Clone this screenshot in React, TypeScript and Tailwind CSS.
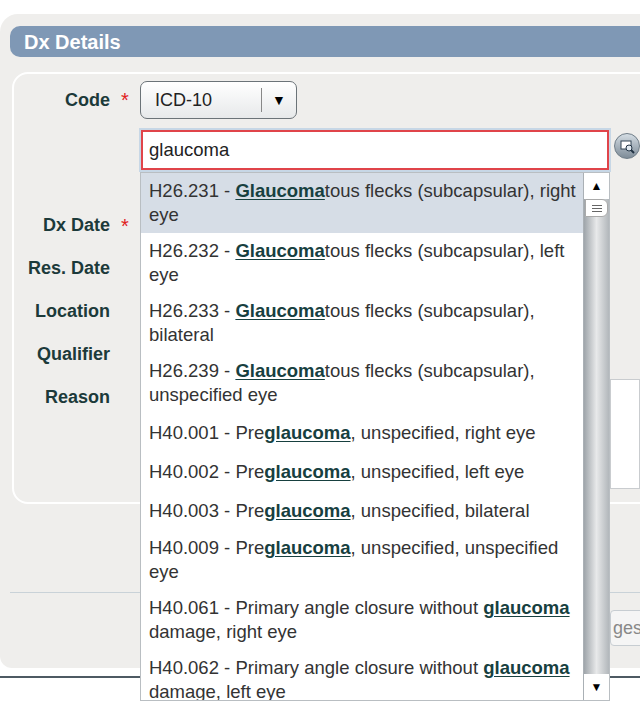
import React from "react";

const T = ({ pre, hit, post }: { pre: string; hit: string; post: string }) => (
  <>
    {pre}
    <b className="font-bold underline text-[#17403f] underline-offset-2">{hit}</b>
    {post}
  </>
);

const rows: { pre: string; hit: string; post: string; h: number }[] = [
  { pre: "H26.231 - ", hit: "Glaucoma", post: "tous flecks (subcapsular), right eye", h: 60 },
  { pre: "H26.232 - ", hit: "Glaucoma", post: "tous flecks (subcapsular), left eye", h: 60 },
  { pre: "H26.233 - ", hit: "Glaucoma", post: "tous flecks (subcapsular), bilateral", h: 60 },
  { pre: "H26.239 - ", hit: "Glaucoma", post: "tous flecks (subcapsular), unspecified eye", h: 60 },
  { pre: "H40.001 - Pre", hit: "glaucoma", post: ", unspecified, right eye", h: 39 },
  { pre: "H40.002 - Pre", hit: "glaucoma", post: ", unspecified, left eye", h: 39 },
  { pre: "H40.003 - Pre", hit: "glaucoma", post: ", unspecified, bilateral", h: 39 },
  { pre: "H40.009 - Pre", hit: "glaucoma", post: ", unspecified, unspecified eye", h: 60 },
  { pre: "H40.061 - Primary angle closure without ", hit: "glaucoma", post: " damage, right eye", h: 60 },
  { pre: "H40.062 - Primary angle closure without ", hit: "glaucoma", post: " damage, left eye", h: 60 },
];

const Label = ({ text, star }: { text: string; star?: boolean }) => (
  <div className="flex items-center h-[43px]">
    <span className="w-[96px] text-right font-bold text-[18px] text-[#1c3a3a]">{text}</span>
    <span className="w-[30px] text-center text-[#e0201c] text-[20px]">{star ? "*" : ""}</span>
  </div>
);

export default function App() {
  return (
    <div className="relative w-[640px] h-[720px] bg-white overflow-hidden" style={{ fontFamily: '"Liberation Sans", Arial, sans-serif' }}>
      <div className="absolute left-0 top-[14px] w-[660px] h-[654px] bg-[#efeeec] rounded-tl-[18px] rounded-bl-[12px] pt-[12px] pl-[10px]">
        <div className="h-[31px] bg-[#7f98b5] rounded-l-[10px] flex items-center pl-[14px] text-white font-bold text-[20px]">Dx Details</div>
        <div className="mt-[15px] ml-[2px] h-[432px] border-2 border-white rounded-[16px] pt-[6px]">
          <div className="flex items-center h-[40px]">
            <Label text="Code" star />
            <div className="w-[157px] h-[38px] border border-[#6b7378] rounded-[7px] bg-gradient-to-b from-white to-[#e7e9ea] flex items-center">
              <span className="pl-[14px] text-[18px] text-[#222] flex-1">ICD-10</span>
              <span className="w-px h-[24px] bg-[#888]" />
              <span className="w-[34px] text-center text-[14px] text-black">▼</span>
            </div>
          </div>
          <div className="mt-[84px]">
            <Label text="Dx Date" star />
            <Label text="Res. Date" />
            <Label text="Location" />
            <Label text="Qualifier" />
            <Label text="Reason" />
          </div>
        </div>
        <div className="absolute right-[20px] top-[365px] w-[30px] h-[110px] bg-white border border-[#c9cccf]" />
        <div className="absolute left-[10px] right-0 top-[578px] h-px bg-[#c9d2d8]" />
        <div className="absolute left-[610px] top-[596px] w-[60px] h-[36px] border border-[#c7cdd2] rounded bg-[#f5f5f5] text-[18px] text-[#888] flex items-center pl-[2px]">ges</div>
      </div>
      <div className="absolute left-0 right-0 top-[676px] h-[2px] bg-[#4d5a63]" />

      <div className="absolute left-[139px] top-[128px] w-[472px] h-[44px] bg-[#c7d7e6] p-[2px]">
        <div className="h-full bg-white border-2 border-[#e0444a] flex items-center pl-[6px] text-[18.5px] text-[#222]">glaucoma</div>
      </div>
      <div className="absolute left-[614px] top-[133px] w-[26px] h-[26px] rounded-full bg-gradient-to-b from-[#d5dde4] to-[#7e8c98] border border-[#6f7d88] flex items-center justify-center">
        <svg width="16" height="16" viewBox="0 0 16 16"><rect x="2" y="3" width="10" height="8" fill="#fff" stroke="#345" /><circle cx="10" cy="10" r="3" fill="#dfe8ef" stroke="#234" /><path d="M12 12l3 3" stroke="#234" strokeWidth="2" /></svg>
      </div>

      <div className="absolute left-[140px] top-[172px] w-[470px] h-[529px] bg-white border border-[#b9bec2] flex overflow-hidden">
        <div className="flex-1 overflow-hidden">
          {rows.map((r, i) => (
            <div key={i} className={`pl-[8px] pr-[4px] flex items-center text-[18.5px] leading-[24px] text-[#333] ${i === 0 ? "bg-[#d6dde6]" : ""}`} style={{ height: r.h }}>
              <div><T pre={r.pre} hit={r.hit} post={r.post} /></div>
            </div>
          ))}
        </div>
        <div className="w-[26px] flex flex-col border-l border-[#aab0b5] bg-gradient-to-r from-[#9fa5aa] via-[#e8e9ea] to-[#b2b7bb]">
          <div className="h-[26px] bg-white flex items-center justify-center text-[12px] text-black">▲</div>
          <div className="h-[18px] mx-[1px] bg-white border border-[#aaa] rounded-r-[6px] flex flex-col justify-center items-center gap-[2px]">
            <span className="w-[10px] h-px bg-[#666]" /><span className="w-[10px] h-px bg-[#666]" /><span className="w-[10px] h-px bg-[#666]" />
          </div>
          <div className="flex-1" />
          <div className="h-[26px] bg-white flex items-center justify-center text-[12px] text-black">▼</div>
        </div>
      </div>
    </div>
  );
}
